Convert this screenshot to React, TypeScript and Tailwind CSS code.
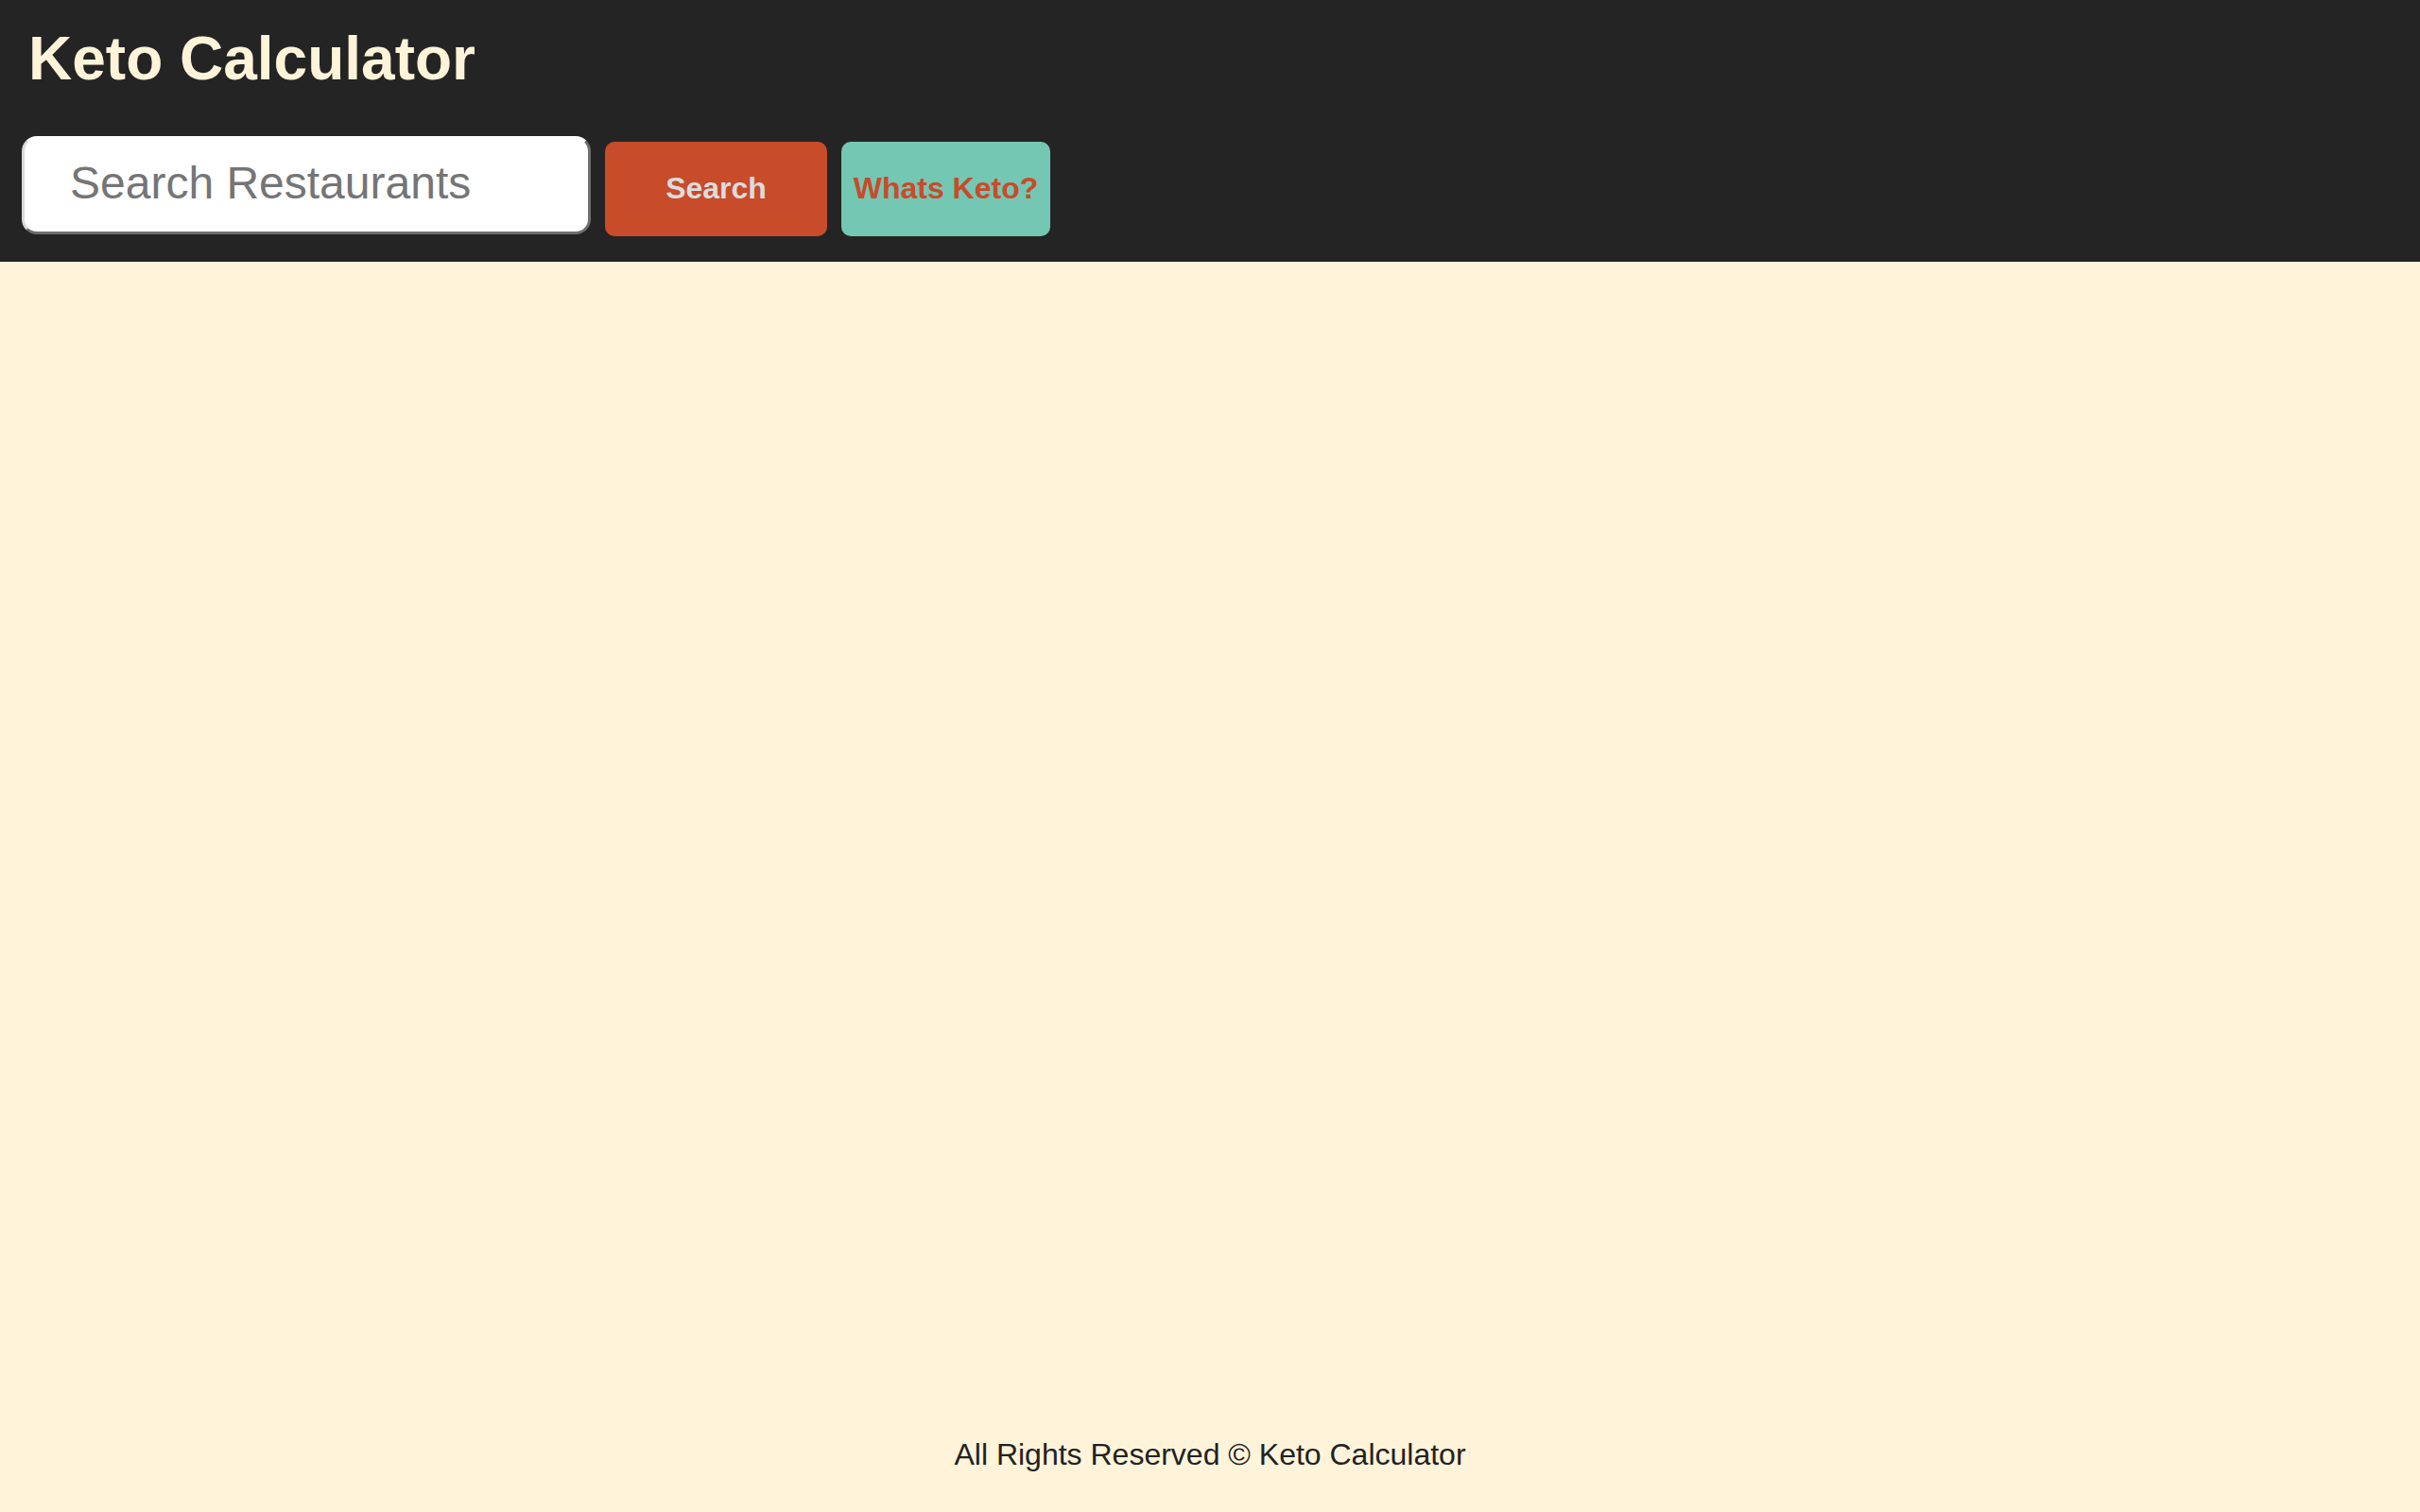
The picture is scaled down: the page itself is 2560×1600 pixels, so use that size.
import { useState } from "react";

export default function App() {
  const [query, setQuery] = useState("");

  return (
    <div className="flex min-h-screen flex-col bg-[#fff4da] font-['Liberation_Sans',Arial,sans-serif]">
      {/* header */}
      <header className="h-[277px] bg-[#242424] px-[23px] pt-[25px]">
        <h1 className="pl-[7px] text-[64px] font-bold leading-[74px] text-[#fff4da]">
          Keto Calculator
        </h1>
        <div className="mt-[45px] flex items-start gap-[15px]">
          <input
            value={query}
            onChange={(e) => setQuery(e.target.value)}
            placeholder="Search Restaurants"
            className="h-[104px] w-[602px] rounded-[16px] border-[3px] border-b-[#6f6f6f] border-l-[#d9d9d9] border-r-[#6f6f6f] border-t-white bg-white pb-[6px] pl-[48px] text-[48px] text-[#222] outline-none placeholder:text-[#757575]"
          />
          <button className="mt-[6px] h-[100px] w-[235px] rounded-[10px] bg-[#c84b2a] pb-[2px] text-[32px] font-bold text-[#dcdcdc]">
            Search
          </button>
          <button className="mt-[6px] h-[100px] w-[221px] rounded-[10px] bg-[#73c7b3] pb-[2px] text-[32px] font-bold text-[#c84b2a]">
            Whats Keto?
          </button>
        </div>
      </header>

      <main className="flex-1" />

      <footer className="pb-[42px] text-center text-[32px] leading-[37px] text-[#222]">
        All Rights Reserved © Keto Calculator
      </footer>
    </div>
  );
}
